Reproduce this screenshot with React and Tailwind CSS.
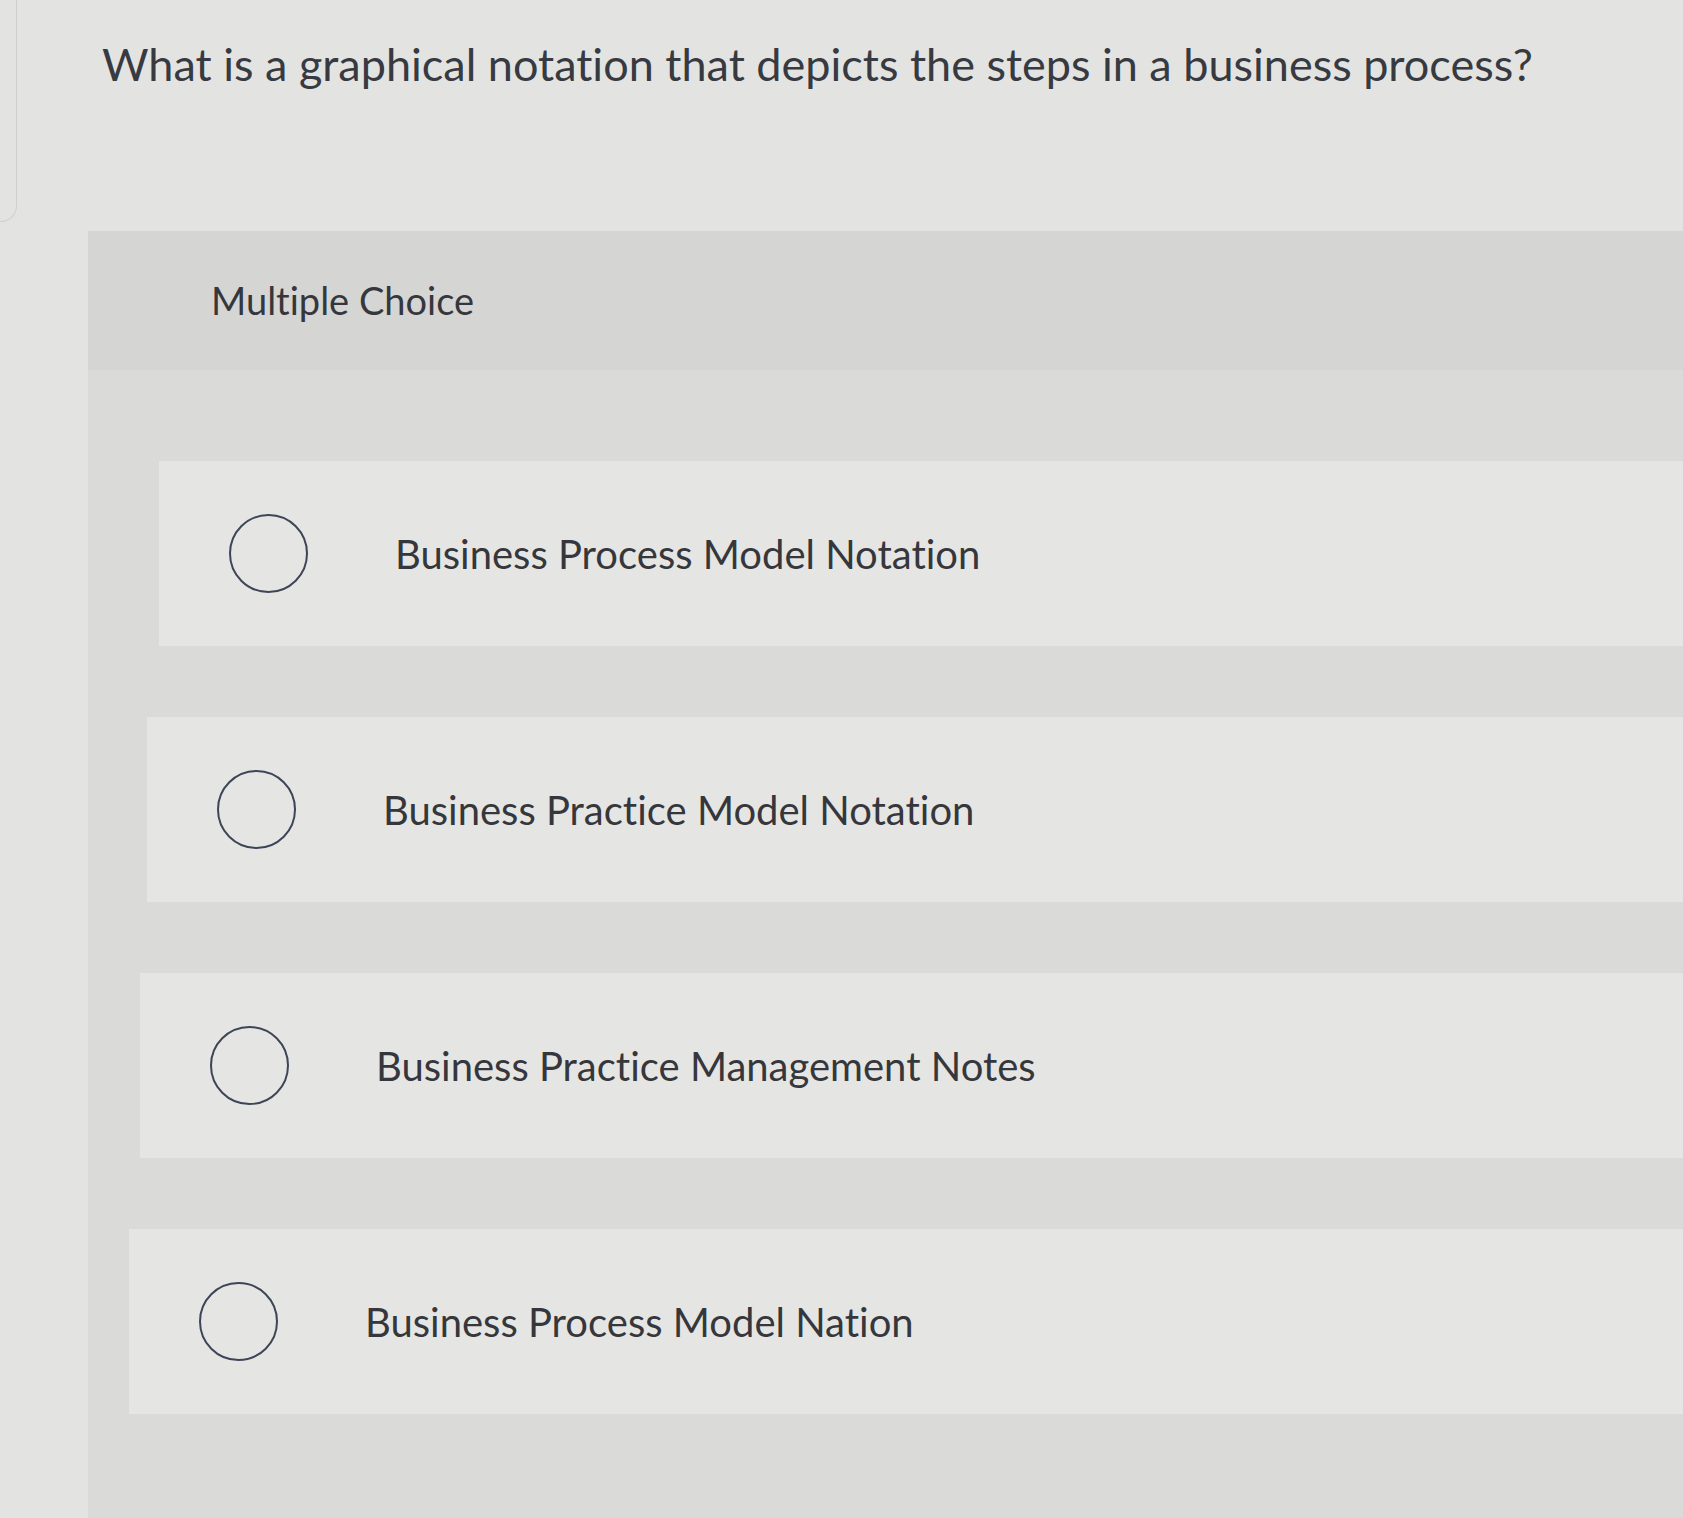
const choices = [
  { label: "Business Process Model Notation", shift: "ml-[71px]" },
  { label: "Business Practice Model Notation", shift: "ml-[59px]" },
  { label: "Business Practice Management Notes", shift: "ml-[52px]" },
  { label: "Business Process Model Nation", shift: "ml-[41px]" },
];

function Choice({ label, shift }) {
  return (
    <div
      className={`${shift} flex h-[185px] items-center bg-[#e5e6e3] pl-[70px]`}
    >
      <span className="h-[79px] w-[79px] shrink-0 rounded-full border-[2.5px] border-[#3d4556]" />
      <span className="ml-[87px] text-[40px] text-[#36373c]">{label}</span>
    </div>
  );
}

export default function App() {
  return (
    <div
      className="flex min-h-[1518px] w-[1683px] flex-col bg-[#e3e4e1] [font-variant-ligatures:none]"
      style={{ fontFamily: "Lato, 'Open Sans', sans-serif" }}
    >
      <div className="flex h-[231px]">
        <div className="h-[222px] w-[17px] shrink-0 rounded-br-2xl border-r border-b border-[#cfd0cd]" />
        <h1 className="ml-[85px] mt-[36px] text-[45px] leading-tight text-[#373a41]">
          What is a graphical notation that depicts the steps in a business
          process?
        </h1>
      </div>

      <section className="ml-[88px] flex flex-1 flex-col bg-[#dadbd8]">
        <div className="flex h-[139px] items-center bg-[#d5d6d4] pl-[123px]">
          <p className="text-[38px] text-[#36373c]">Multiple Choice</p>
        </div>

        <div className="flex flex-col gap-[71px] pt-[91px] pb-[90px]">
          {choices.map((c) => (
            <Choice key={c.label} label={c.label} shift={c.shift} />
          ))}
        </div>
      </section>
    </div>
  );
}
